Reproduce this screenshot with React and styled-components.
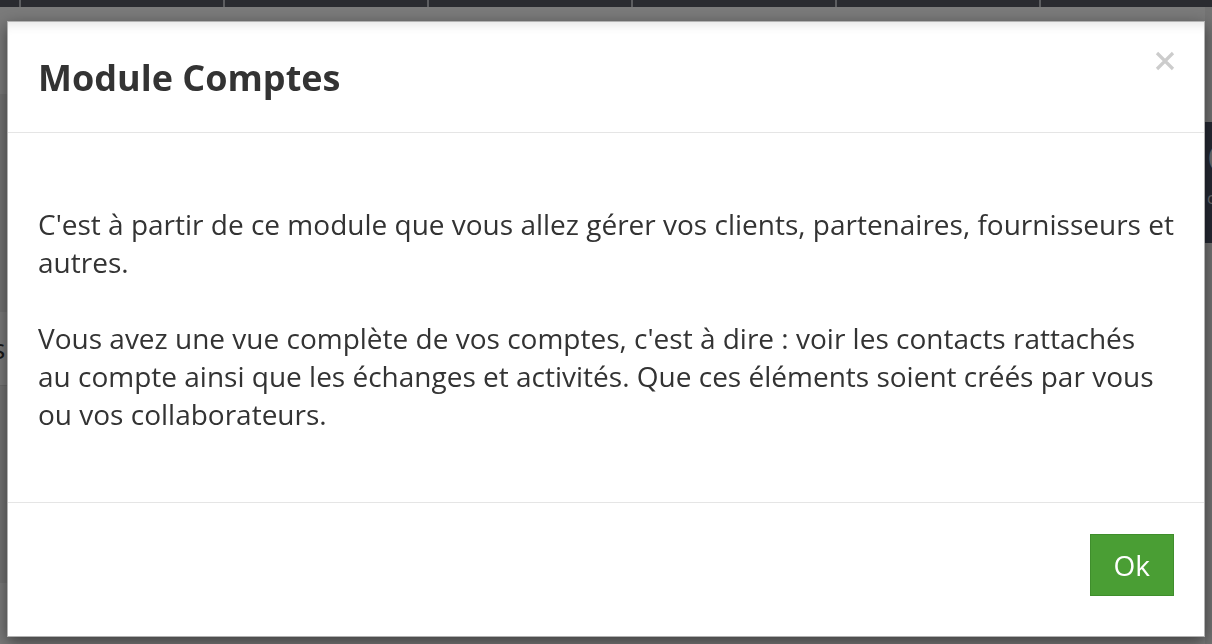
import React from 'react';
import styled, { createGlobalStyle } from 'styled-components';

const GlobalStyle = createGlobalStyle`
  html, body {
    margin: 0;
    padding: 0;
    height: 100%;
    overflow: hidden;
  }
  body {
    font-family: 'Open Sans', 'Noto Sans', sans-serif;
    color: #333;
    background: #e6e6e6;
  }
`;

// Page sitting under the backdrop
const Page = styled.div`
  height: 100vh;
  display: flex;
  flex-direction: column;
  background: #e6e6e6;
`;

const TopBar = styled.div`
  height: 8px;
  display: flex;
  background: #545660;
  padding-left: 19px;
  overflow: hidden;
`;

const Tab = styled.div`
  flex: 0 0 auto;
  width: 202px;
  border-left: 2px solid #b9bac0;
`;

const Content = styled.div`
  flex: 1;
  display: flex;
`;

const Main = styled.div`
  flex: 1;
  display: flex;
  flex-direction: column;
`;

const Band = styled.div`
  height: ${(p) => p.h}px;
  background: ${(p) => (p.light ? '#f5f5f5' : '#e6e6e6')};
  border-bottom: ${(p) => (p.line ? '1px solid #d6d6d6' : 'none')};
  font-size: 28px;
  line-height: ${(p) => p.h}px;
  color: #333;
  white-space: nowrap;
  overflow: hidden;
`;

const Tail = styled.span`
  margin-left: -8px;
`;

const Side = styled.div`
  width: 7px;
  display: flex;
  flex-direction: column;
  overflow: hidden;
`;

const SidePanel = styled.div`
  margin-top: 115px;
  height: 109px;
  background: #4c5266;
  color: #d8d9de;
  padding: 12px 0 0 2px;
  font-size: 16px;
  line-height: 20px;
  white-space: nowrap;
`;

const Big = styled.div`
  font-size: 38px;
  line-height: 46px;
  margin-bottom: 8px;
`;

// Overlay + dialog
const Backdrop = styled.div`
  position: fixed;
  inset: 0;
  background: rgba(0, 0, 0, 0.5);
`;

const ModalWrap = styled.div`
  position: fixed;
  inset: 0;
  padding: 21px 7px 7px 7px;
  display: flex;
`;

const Dialog = styled.div`
  flex: 1;
  display: flex;
  flex-direction: column;
  background: #fff;
  border: 1px solid rgba(0, 0, 0, 0.3);
  box-shadow: 0 5px 15px rgba(0, 0, 0, 0.5),
    inset 0 12px 12px -10px rgba(0, 0, 0, 0.12);
`;

const Header = styled.div`
  position: relative;
  padding: 30px 30px 29px 30px;
  border-bottom: 1px solid #e5e5e5;
`;

const Title = styled.h4`
  margin: 0;
  font-size: 36px;
  line-height: 51px;
  font-weight: 700;
  color: #333;
`;

const Close = styled.button`
  position: absolute;
  top: 29px;
  right: 29px;
  width: 20px;
  height: 20px;
  padding: 0;
  border: 0;
  background: transparent;
  cursor: pointer;
  display: flex;
`;

const Body = styled.div`
  flex: 1;
  padding: 72px 30px 0 30px;
  font-size: 28px;
  line-height: 38px;
  color: #333;
  border-bottom: 1px solid #e5e5e5;
`;

const Para = styled.p`
  margin: 0 0 38px 0;
`;

const Footer = styled.div`
  display: flex;
  justify-content: flex-end;
  padding: 31px 30px 40px 30px;
`;

const OkButton = styled.button`
  font-family: 'Open Sans', 'Noto Sans', sans-serif;
  font-size: 28px;
  line-height: 38px;
  padding: 11px 23px;
  color: #fff;
  background: #4a9e34;
  border: 1px solid #3f8e2c;
  border-radius: 0;
  cursor: pointer;
`;

export default function App() {
  const tabs = [0, 1, 2, 3, 4, 5];
  return (
    <>
      <GlobalStyle />
      <Page>
        <TopBar>
          {tabs.map((t) => (
            <Tab key={t} />
          ))}
        </TopBar>
        <Content>
          <Main>
            <Band h={87} light />
            <Band h={218} />
            <Band h={73} light line>
              <Tail>s</Tail>
            </Band>
            <Band h={20} />
            <Band h={177} />
            <Band h={61} light />
          </Main>
          <Side>
            <SidePanel>
              <Big>C</Big>
              <div>cl</div>
            </SidePanel>
          </Side>
        </Content>
      </Page>
      <Backdrop />
      <ModalWrap>
        <Dialog>
          <Header>
            <Title>Module Comptes</Title>
            <Close aria-label="Fermer">
              <svg width="20" height="20" viewBox="0 0 20 20">
                <path
                  d="M2 2 L18 18 M18 2 L2 18"
                  stroke="#cccccc"
                  strokeWidth="3.2"
                  strokeLinecap="butt"
                />
              </svg>
            </Close>
          </Header>
          <Body>
            <Para>
              C'est à partir de ce module que vous allez gérer vos clients, partenaires,
              fournisseurs et autres.
            </Para>
            <Para>
              Vous avez une vue complète de vos comptes, c'est à dire : voir les contacts
              rattachés au compte ainsi que les échanges et activités. Que ces éléments
              soient créés par vous ou vos collaborateurs.
            </Para>
          </Body>
          <Footer>
            <OkButton>Ok</OkButton>
          </Footer>
        </Dialog>
      </ModalWrap>
    </>
  );
}
